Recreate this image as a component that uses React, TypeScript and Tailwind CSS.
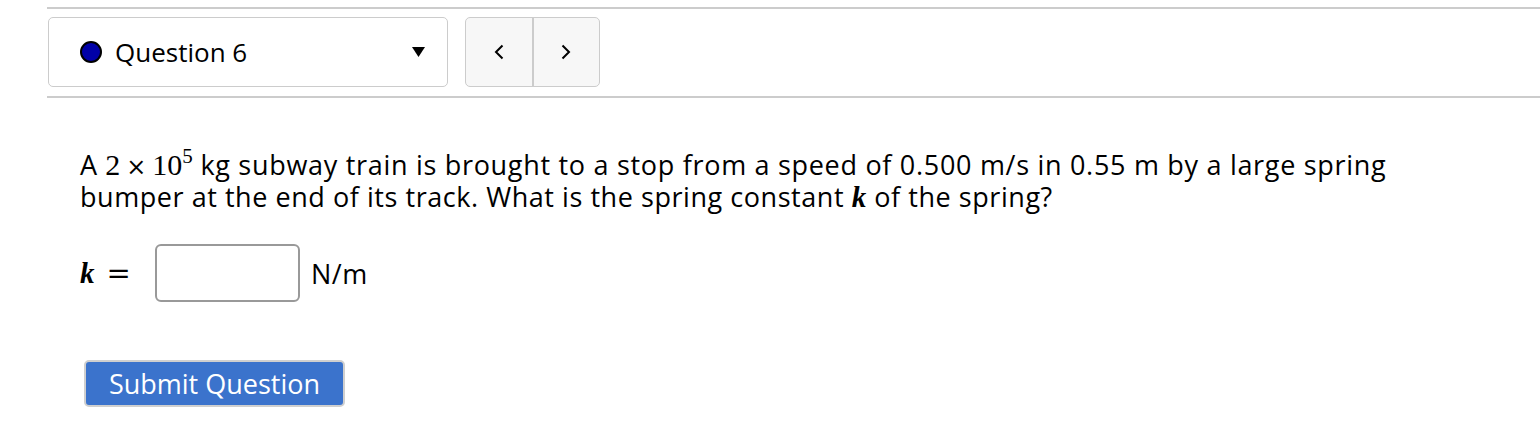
import React from 'react'

function MathK() {
  return <span className="font-['Liberation_Serif',serif] italic font-bold text-[29px] leading-none">k</span>
}

export default function App() {
  return (
    <div className="w-[1540px] h-[444px] bg-white text-black font-['Open_Sans',sans-serif]">
      {/* Question nav */}
      <div className="ml-[47px] pt-[7px]">
        <div className="border-t-2 border-[#cccccc] pt-[8px] pb-[9px] pl-px flex gap-[17px]">
          <button className="w-[400px] h-[70px] border border-[#cccccc] rounded-[5px] flex items-center pl-[31px] pr-[22px]">
            <span className="w-[22px] h-[22px] rounded-full bg-[#0000a8] border-2 border-black" />
            <span className="ml-[13px] text-[26px] leading-none">Question 6</span>
            <svg className="ml-auto" width="13" height="10" viewBox="0 0 13 10">
              <path d="M0 0 H13 L6.5 10 Z" fill="#000" />
            </svg>
          </button>
          <div className="h-[70px] w-[135px] border border-[#cccccc] rounded-[5px] bg-[#f7f7f7] flex">
            <button className="flex-1 flex items-center justify-center border-r-2 border-[#cccccc]">
              <svg width="10" height="16" viewBox="0 0 10 16">
                <path d="M8.5 1.5 L2 8 L8.5 14.5" stroke="#000" strokeWidth="2" fill="none" />
              </svg>
            </button>
            <button className="flex-1 flex items-center justify-center">
              <svg width="10" height="16" viewBox="0 0 10 16">
                <path d="M1.5 1.5 L8 8 L1.5 14.5" stroke="#000" strokeWidth="2" fill="none" />
              </svg>
            </button>
          </div>
        </div>
        <div className="border-t-2 border-[#cccccc]" />
      </div>

      {/* Question body */}
      <div className="pl-[80px] pt-[51px]">
        <p className="text-[27px] leading-[32px] tracking-[0.55px] w-[1420px]">
          A{' '}
          <span className="font-['Liberation_Serif',serif] text-[30px] leading-none tracking-normal">
            2
            <span className="mx-[6px] font-['DejaVu_Serif',serif] text-[24px]">×</span>
            10<span className="relative -top-[12px] text-[21px]">5</span>
          </span>{' '}
          <span className="tracking-[0.7px]">
            kg subway train is brought to a stop from a speed of 0.500 m/s in 0.55 m by a large spring
          </span>
          <br />
          bumper at the end of its track. What is the spring constant <MathK /> of the spring?
        </p>

        <div className="mt-[31px] flex items-center h-[58px]">
          <span className="w-[75px] flex items-center">
            <MathK />
            <span className="ml-[12px] font-['DejaVu_Serif',serif] text-[29px] leading-none">=</span>
          </span>
          <input className="w-[145px] h-[58px] border-2 border-[#999999] rounded-[6px] outline-none" />
          <span className="ml-[11px] text-[27px] leading-none tracking-[0.5px]">N/m</span>
        </div>

        <button className="mt-[58px] ml-[4px] w-[261px] h-[47px] rounded-[5px] bg-[#3b73cc] border-2 border-[#cfcfcf] text-white text-[27px] leading-none">
          Submit Question
        </button>
      </div>
    </div>
  )
}
